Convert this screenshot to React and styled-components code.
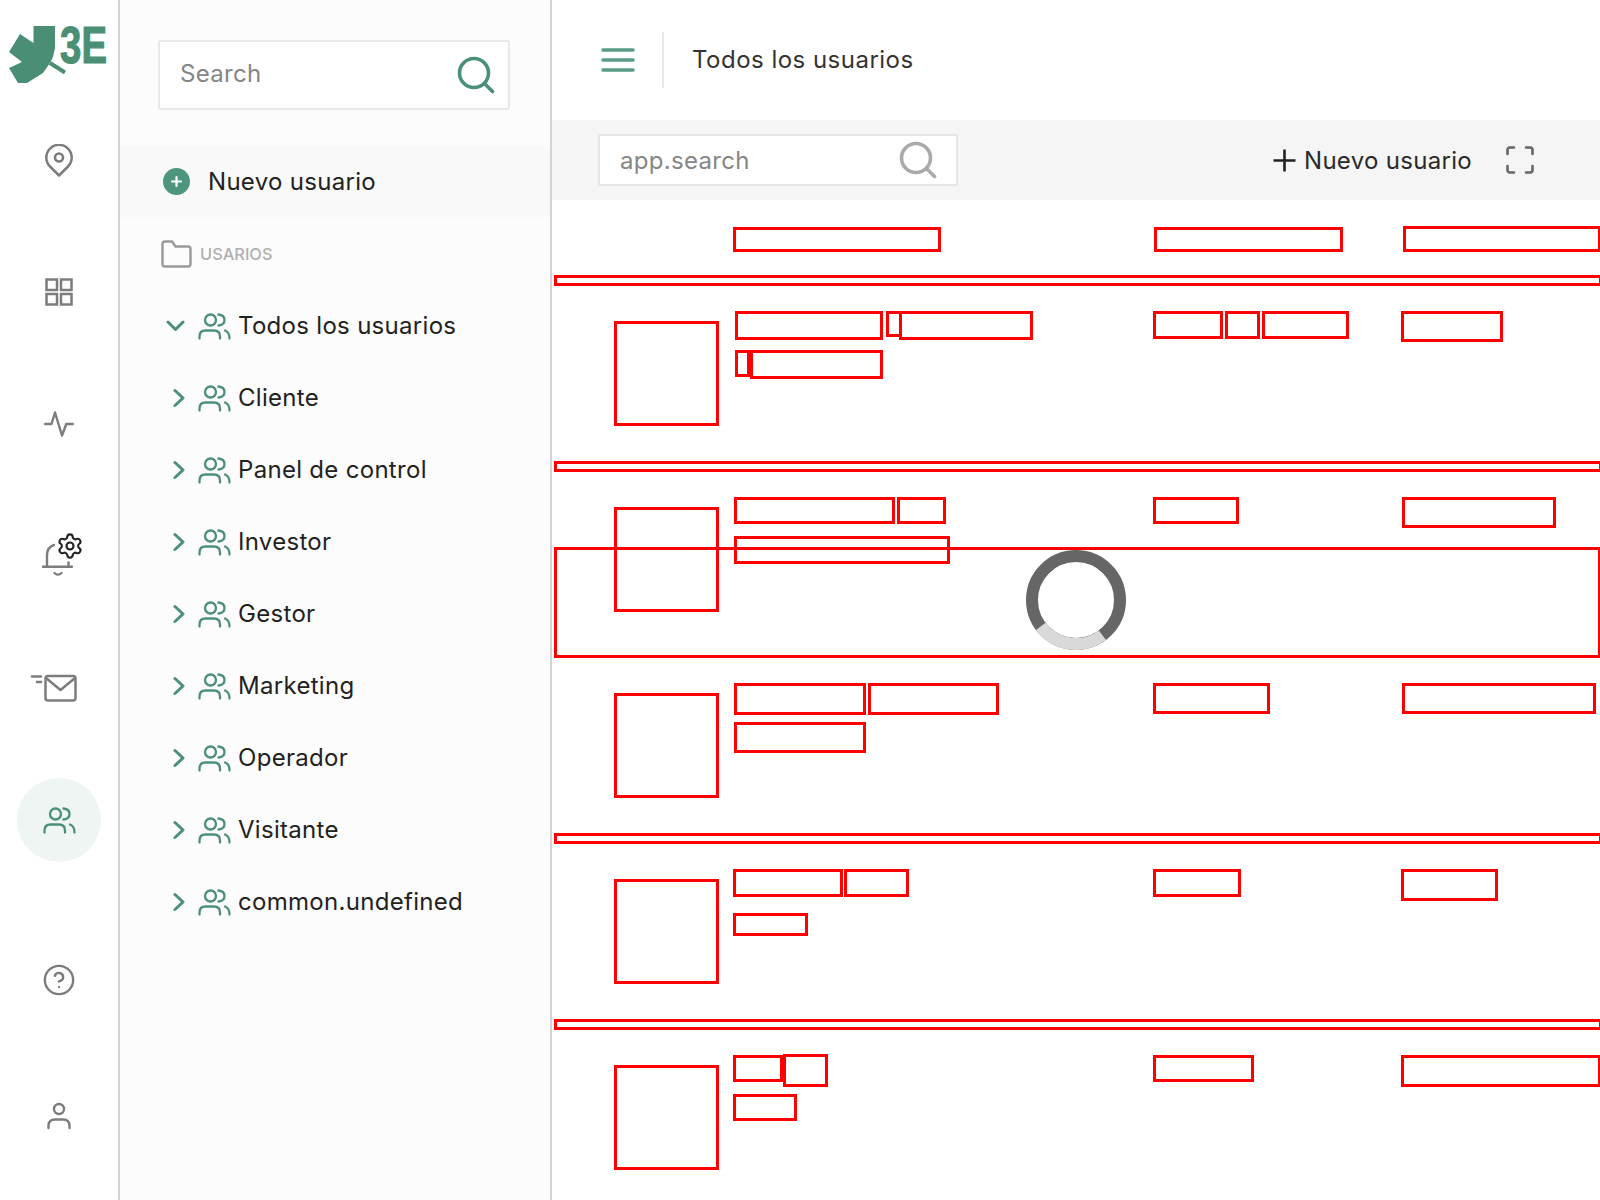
import styled, { createGlobalStyle, css } from 'styled-components';
import { CircleHelp, Settings } from 'lucide-react';

const GREEN = '#4a9079';
const GRAY = '#7c7c7c';

const GlobalStyle = createGlobalStyle`
    html, body {
        margin: 0;
        padding: 0;
        background: #fff;
        overflow: hidden;
    }
    * {
        box-sizing: border-box;
    }
`;

const Page = styled.div`
    display: flex;
    width: 1600px;
    height: 1200px;
    overflow: hidden;
    font-family: Inter, "Liberation Sans", sans-serif;
    font-size: 24px;
    letter-spacing: 0.3px;
    color: #222;
`;

// left icon rail
const Rail = styled.nav`
    flex: 0 0 120px;
    display: flex;
    flex-direction: column;
    align-items: stretch;
    background: #fff;
    border-right: 2px solid #d4d4d4;
`;

const LogoWrap = styled.div`
    flex: none;
    height: 94px;
`;

const RailSlot = styled.div`
    flex: none;
    height: ${(p) => p.$h || 132}px;
    margin-top: ${(p) => p.$mt || 0}px;
    display: flex;
    align-items: center;
    justify-content: center;
    padding-top: ${(p) => p.$pt || 0}px;
    padding-left: ${(p) => p.$pl || 0}px;
    padding-right: ${(p) => p.$pr || 0}px;
`;

const ActiveCircle = styled.div`
    width: 84px;
    height: 84px;
    border-radius: 50%;
    background: #eef5f3;
    display: flex;
    align-items: center;
    justify-content: center;
`;

// tree panel
const Panel = styled.aside`
    flex: 0 0 432px;
    padding-top: 40px;
    background: #fcfcfc;
    border-right: 2px solid #d4d4d4;
`;

const PanelSearch = styled.div`
    width: 352px;
    height: 70px;
    margin-left: 38px;
    padding: 0 13px 0 20px;
    display: flex;
    align-items: center;
    justify-content: space-between;
    background: #fff;
    border: 2px solid #e8e8e8;
    border-radius: 3px;
    color: #858585;
`;

const SearchText = styled.span`
    margin-bottom: ${(p) => p.$mb || 0}px;
`;

const NewBand = styled.div`
    height: 71px;
    margin-top: 36px;
    padding-left: 43px;
    display: flex;
    align-items: center;
    gap: 18px;
    background: #f9f9f9;
`;

const SectionHead = styled.div`
    height: 73px;
    padding-left: 41px;
    display: flex;
    align-items: center;
    gap: 8px;
    font-size: 16.4px;
    font-weight: 500;
    letter-spacing: 0;
    color: #b0b0b0;
`;

const TreeItem = styled.div`
    height: 72px;
    padding-left: 40px;
    display: flex;
    align-items: center;
`;

const Chevron = styled.div`
    width: 38px;
    display: flex;
    padding-left: ${(p) => (p.$open ? 6 : 13)}px;
`;

const TreeLabel = styled.span`
    margin-left: 7px;
    margin-bottom: 2px;
`;

// main area
const Main = styled.main`
    flex: 1;
    min-width: 0;
    display: flex;
    flex-direction: column;
`;

const TopBar = styled.header`
    flex: none;
    height: 120px;
    padding-left: 49px;
    display: flex;
    align-items: center;
    color: #333;
`;

const TopDivider = styled.div`
    width: 2px;
    height: 56px;
    margin: 0 28px 0 27px;
    background: #e8e8e8;
`;

const PageTitle = styled.span`
    margin-bottom: 2px;
    letter-spacing: 0.48px;
`;

const Toolbar = styled.div`
    flex: none;
    height: 80px;
    padding: 0 66px 0 46px;
    display: flex;
    align-items: center;
    background: #f5f5f5;
`;

const ToolbarSearch = styled.div`
    width: 360px;
    height: 52px;
    padding: 0 19px 0 20px;
    display: flex;
    align-items: center;
    justify-content: space-between;
    background: #fff;
    border: 2px solid #e6e6e6;
    color: #868686;
`;

const NewButton = styled.div`
    margin-left: auto;
    display: flex;
    align-items: center;
    gap: 8px;
    color: #2a2a2a;
`;

const ExpandButton = styled.div`
    margin-left: 34px;
    display: flex;
`;

// user table, only the outlined placeholders are left of it
const Table = styled.div`
    flex: 1;
    padding-left: 2px;
`;

const columns = css`
    display: grid;
    grid-template-columns: 119px 420px 248px 1fr;
    padding-left: 60px;
`;

const HeadRow = styled.div`
    ${columns}
    height: 75px;
    padding-top: 27px;
`;

const Row = styled.div`
    ${columns}
    height: 175px;
    padding-top: 25px;
`;

const Outline = styled.div`
    flex: none;
    width: ${(p) => p.$w}px;
    height: ${(p) => p.$h}px;
    margin-left: ${(p) => p.$ml || 0}px;
    margin-top: ${(p) => p.$mt || 0}px;
    border: 3px solid #f00;
`;

const Divider = styled.div`
    position: relative;
    height: 11px;
    margin-right: -2px;
    border: ${(p) => (p.$plain ? 'none' : '3px solid #f00')};
`;

const LoadingOverlay = styled.div`
    position: absolute;
    left: 0;
    right: 2px;
    bottom: 0;
    height: 111px;
    padding: 0 4px 5px 0;
    display: flex;
    align-items: center;
    justify-content: center;
    border: 3px solid #f00;
    border-right-width: 2px;
`;

const CellLine = styled.div`
    display: flex;
    align-items: flex-start;
    height: ${(p) => p.$h || 39}px;
`;

const Cell = styled.div`
    display: flex;
    align-items: flex-start;
`;

const svgBase = { fill: 'none', strokeLinecap: 'round', strokeLinejoin: 'round' };

const Logo = () => (
    <svg width="118" height="93" viewBox="0 0 118 93">
        <polygon
            fill="#4a8f74"
            points="33.5,26 55,26 55,48 53,57 50,63 43,73 27,83 18,83 9,68 22,62 9,52 20,34 33.5,43"
        />
        <line x1="50" y1="63" x2="65" y2="72.5" stroke="#4a8f74" strokeWidth="4" />
        <text
            transform="translate(60 62.5) scale(0.75 1)"
            fill="#4a8f74"
            stroke="#4a8f74"
            strokeWidth="1.2"
            fontFamily="Liberation Sans, sans-serif"
            fontWeight="700"
            fontSize="51"
        >
            3E
        </text>
    </svg>
);

const PinIcon = () => (
    <svg width="28" height="33" viewBox="0 0 28 33" {...svgBase} stroke={GRAY} strokeWidth="2.5">
        <path d="M14 31.5 L5 22.5 A12.7 12.7 0 1 1 23 22.5 Z" />
        <circle cx="14" cy="13.5" r="4" />
    </svg>
);

const GridIcon = () => (
    <svg width="28" height="28" viewBox="0 0 28 28" fill="none" stroke={GRAY} strokeWidth="2.5">
        <rect x="1.5" y="1.5" width="10.5" height="10.5" />
        <rect x="16" y="1.5" width="10.5" height="10.5" />
        <rect x="1.5" y="16" width="10.5" height="10.5" />
        <rect x="16" y="16" width="10.5" height="10.5" />
    </svg>
);

const PulseIcon = () => (
    <svg width="30" height="26" viewBox="0 0 30 26" {...svgBase} stroke={GRAY} strokeWidth="2.4">
        <path d="M1 13 H7.5 L11 1.5 L18 24.5 L22.3 13 H29" />
    </svg>
);

const BellGearIcon = () => (
    <svg width="42" height="46" viewBox="0 0 42 46" {...svgBase} stroke={GRAY} strokeWidth="2.4">
        <path d="M13 13 C8.5 14.5 6 18 6 23 V34.5" />
        <path d="M2 34.7 H31" />
        <path d="M27.5 30.5 V34.5" />
        <path d="M13.5 41 C15.5 43 18.5 43 20.5 41" />
        <Settings x="15" y="0" width="28" height="28" strokeWidth="1.8" />
    </svg>
);

const MailIcon = () => (
    <svg width="50" height="32" viewBox="0 0 50 32" {...svgBase} stroke={GRAY} strokeWidth="2.5">
        <rect x="16.5" y="4" width="30" height="24.5" rx="2.5" />
        <path d="M17 6 L31.5 18 L46 6" />
        <path d="M3 4.5 H12" />
        <path d="M8 10 H12" />
    </svg>
);

const UsersIcon = ({ color = GREEN }) => (
    <svg width="33" height="27" viewBox="0 0 33 27" {...svgBase} stroke={color} strokeWidth="2.3">
        <circle cx="12.5" cy="7" r="5.5" />
        <path d="M20.5 1.5 C25 2 26.5 4.5 26.5 7 C26.5 9.5 25 12 20.5 12.5" />
        <path d="M1.5 25.5 V23.5 C1.5 19.5 4 17.5 7.5 17.5 H16 C19.5 17.5 22 19.5 22 23.5 V25.5" />
        <path d="M27 17.5 C30 18.5 31.5 21 31.5 25.5" />
    </svg>
);

const UserIcon = () => (
    <svg width="24" height="28" viewBox="0 0 24 28" {...svgBase} stroke={GRAY} strokeWidth="2.4">
        <circle cx="12" cy="7" r="5" />
        <path d="M1.5 26 V24 C1.5 20 4 17.5 8 17.5 H16 C20 17.5 22.5 20 22.5 24 V26" />
    </svg>
);

const SearchIcon = ({ color }) => (
    <svg width="38" height="38" viewBox="0 0 38 38" {...svgBase} stroke={color} strokeWidth="3.6">
        <circle cx="17" cy="17" r="14.5" />
        <path d="M27.5 27.5 L35.5 35.5" />
    </svg>
);

const PlusCircle = () => (
    <svg width="27" height="27" viewBox="0 0 27 27">
        <circle cx="13.5" cy="13.5" r="13.5" fill="#4f957d" />
        <path d="M9 13.5 H18 M13.5 9 V18" stroke="#fff" strokeWidth="2.2" strokeLinecap="round" />
    </svg>
);

const FolderIcon = () => (
    <svg width="31" height="28" viewBox="0 0 31 28" {...svgBase} stroke="#999" strokeWidth="2.4">
        <path d="M1.5 4 C1.5 2.5 2.5 1.5 4 1.5 H11 L14.5 6.5 H27 C28.5 6.5 29.5 7.5 29.5 9 V24 C29.5 25.5 28.5 26.5 27 26.5 H4 C2.5 26.5 1.5 25.5 1.5 24 Z" />
    </svg>
);

const ChevronRight = () => (
    <svg width="12" height="20" viewBox="0 0 12 20" {...svgBase} stroke={GREEN} strokeWidth="3">
        <path d="M2 2.5 L10 10 L2 17.5" />
    </svg>
);

const ChevronDown = () => (
    <svg width="19" height="12" viewBox="0 0 19 12" {...svgBase} stroke={GREEN} strokeWidth="3">
        <path d="M2 2 L9.5 9.5 L17 2" />
    </svg>
);

const MenuIcon = () => (
    <svg width="34" height="26" viewBox="0 0 34 26" {...svgBase} stroke="#5a9c88" strokeWidth="3.6">
        <path d="M2 3 H32 M2 13 H32 M2 23 H32" />
    </svg>
);

const PlusIcon = () => (
    <svg width="23" height="23" viewBox="0 0 23 23" stroke="#222" strokeWidth="2.6">
        <path d="M0.5 11.5 H22.5 M11.5 0.5 V22.5" />
    </svg>
);

const ExpandIcon = () => (
    <svg width="28" height="28" viewBox="0 0 28 28" {...svgBase} stroke="#666" strokeWidth="2.6">
        <path d="M1.5 8 V4 C1.5 2.5 2.5 1.5 4 1.5 H8" />
        <path d="M20 1.5 H24 C25.5 1.5 26.5 2.5 26.5 4 V8" />
        <path d="M26.5 20 V24 C26.5 25.5 25.5 26.5 24 26.5 H20" />
        <path d="M8 26.5 H4 C2.5 26.5 1.5 25.5 1.5 24 V20" />
    </svg>
);

const Spinner = () => (
    <svg width="100" height="100" viewBox="0 0 100 100" fill="none" strokeWidth="12">
        <circle cx="50" cy="50" r="44" stroke="#666" />
        <path d="M14.8 76.4 A44 44 0 0 0 76.4 85.2" stroke="#d9d9d9" />
    </svg>
);

const groups = [
    'Cliente',
    'Panel de control',
    'Investor',
    'Gestor',
    'Marketing',
    'Operador',
    'Visitante',
    'common.undefined',
];

const rows = [
    {
        name: [
            [{ w: 148, h: 29, ml: 2 }, { w: 16, h: 26, ml: 3 }, { w: 134, h: 29, ml: -3 }],
            [{ w: 15, h: 27, ml: 2 }, { w: 133, h: 29 }],
        ],
        role: [{ w: 70, h: 28 }, { w: 35, h: 28, ml: 2 }, { w: 87, h: 28, ml: 2 }],
        mail: { w: 102, h: 31 },
    },
    {
        name: [
            [{ w: 161, h: 27, ml: 1 }, { w: 49, h: 27, ml: 2 }],
            [{ w: 216, h: 28, ml: 1 }],
        ],
        role: [{ w: 86, h: 27 }],
        mail: { w: 154, h: 31, ml: 1 },
        loading: true,
    },
    {
        name: [
            [{ w: 132, h: 32, ml: 1 }, { w: 131, h: 32, ml: 2 }],
            [{ w: 132, h: 31, ml: 1 }],
        ],
        role: [{ w: 117, h: 31 }],
        mail: { w: 194, h: 31, ml: 1 },
    },
    {
        name: [
            [{ w: 110, h: 28 }, { w: 65, h: 28, ml: 1 }],
            [{ w: 75, h: 23 }],
        ],
        lineH: 44,
        role: [{ w: 88, h: 28 }],
        mail: { w: 97, h: 32 },
    },
    {
        name: [
            [{ w: 50, h: 27 }, { w: 45, h: 33, mt: -1 }],
            [{ w: 64, h: 27 }],
        ],
        role: [{ w: 101, h: 27 }],
        mail: { w: 200, h: 32 },
    },
];

const box = (b, i) => <Outline key={i} $w={b.w} $h={b.h} $ml={b.ml} $mt={b.mt} />;

const App = () => {
    return (
        <Page>
            <GlobalStyle />
            <Rail>
                <LogoWrap>
                    <Logo />
                </LogoWrap>
                <RailSlot><PinIcon /></RailSlot>
                <RailSlot><GridIcon /></RailSlot>
                <RailSlot><PulseIcon /></RailSlot>
                <RailSlot $pl={6} $h={129}><BellGearIcon /></RailSlot>
                <RailSlot $pr={11} $pt={2} $h={135}><MailIcon /></RailSlot>
                <RailSlot>
                    <ActiveCircle><UsersIcon /></ActiveCircle>
                </RailSlot>
                <RailSlot $mt={28}>
                    <CircleHelp size={34} color={GRAY} strokeWidth={1.7} />
                </RailSlot>
                <RailSlot $mt={4} $pr={1}><UserIcon /></RailSlot>
            </Rail>

            <Panel>
                <PanelSearch>
                    <SearchText $mb={3}>Search</SearchText>
                    <SearchIcon color={GREEN} />
                </PanelSearch>
                <NewBand>
                    <PlusCircle />
                    Nuevo usuario
                </NewBand>
                <SectionHead>
                    <FolderIcon />
                    USARIOS
                </SectionHead>
                <TreeItem>
                    <Chevron $open><ChevronDown /></Chevron>
                    <UsersIcon />
                    <TreeLabel>Todos los usuarios</TreeLabel>
                </TreeItem>
                {groups.map((g) => (
                    <TreeItem key={g}>
                        <Chevron><ChevronRight /></Chevron>
                        <UsersIcon />
                        <TreeLabel>{g}</TreeLabel>
                    </TreeItem>
                ))}
            </Panel>

            <Main>
                <TopBar>
                    <MenuIcon />
                    <TopDivider />
                    <PageTitle>Todos los usuarios</PageTitle>
                </TopBar>
                <Toolbar>
                    <ToolbarSearch>
                        <SearchText>app.search</SearchText>
                        <SearchIcon color="#aaa" />
                    </ToolbarSearch>
                    <NewButton>
                        <PlusIcon />
                        Nuevo usuario
                    </NewButton>
                    <ExpandButton><ExpandIcon /></ExpandButton>
                </Toolbar>
                <Table>
                    <HeadRow>
                        <div />
                        <Cell><Outline $w={208} $h={25} /></Cell>
                        <Cell><Outline $w={189} $h={25} $ml={1} /></Cell>
                        <Cell><Outline $w={198} $h={26} $ml={2} $mt={-1} /></Cell>
                    </HeadRow>
                    <Divider />
                    {rows.map((r, i) => (
                        <div key={i}>
                            <Row>
                                <Outline $w={105} $h={105} $mt={10} />
                                <div>
                                    {r.name.map((line, j) => (
                                        <CellLine key={j} $h={r.lineH}>{line.map(box)}</CellLine>
                                    ))}
                                </div>
                                <Cell>{r.role.map(box)}</Cell>
                                <Cell>{box(r.mail)}</Cell>
                            </Row>
                            {i < rows.length - 1 && (
                                <Divider $plain={r.loading}>
                                    {r.loading && (
                                        <LoadingOverlay><Spinner /></LoadingOverlay>
                                    )}
                                </Divider>
                            )}
                        </div>
                    ))}
                </Table>
            </Main>
        </Page>
    );
};

export default App;
